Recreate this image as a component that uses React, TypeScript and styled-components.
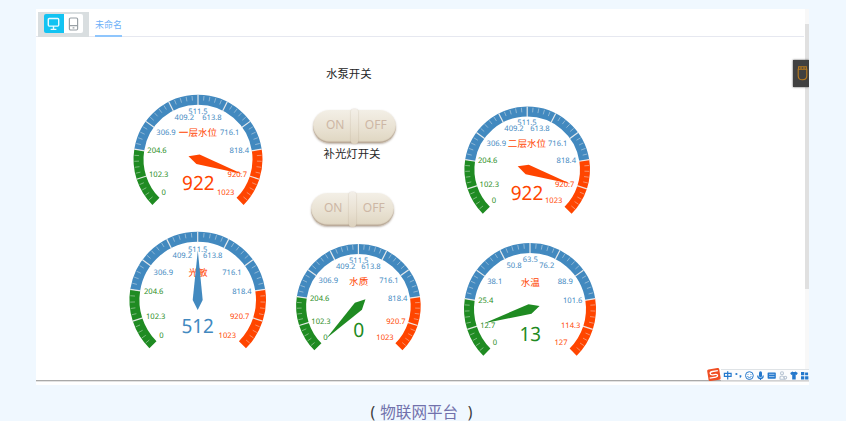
import React from "react";
import styled, { createGlobalStyle } from "styled-components";

const GlobalStyle = createGlobalStyle`
  * { box-sizing: border-box; }
  html, body { margin: 0; padding: 0; background: #f0f8ff; }
  body { font-family: "Noto Sans", "Noto Sans CJK SC", sans-serif; overflow: hidden; }
`;

const BLUE = "#4289bf";
const GREEN = "#1f8b22";
const RED = "#ff4500";

const Page = styled.main`
  display: flex;
  flex-direction: column;
  width: 846px;
  height: 421px;
  padding-top: 9px;
`;
const Panel = styled.section`
  position: relative;
  display: flex;
  flex-direction: column;
  width: 773px;
  height: 376px;
  margin-left: 36px;
  background: #fff;
  overflow: hidden;
`;
const TopBar = styled.header`
  display: flex;
  width: 768px;
  height: 28px;
  padding: 3px 0 0 2px;
  border-bottom: 1px solid #e6e8f0;
`;
const DeviceGroup = styled.div`
  display: flex;
  width: 51px;
  height: 25px;
  padding: 2px 6px 4px;
  background: #d9dee0;
`;
const DeviceButton = styled.button<{ $active?: boolean }>`
  display: flex;
  align-items: center;
  justify-content: center;
  width: 19.5px;
  height: 19px;
  padding: 0;
  border: 0;
  border-radius: ${(p) => (p.$active ? "2px 0 0 2px" : "0 2px 2px 0")};
  background: ${(p) => (p.$active ? "#12c3f2" : "#fff")};
`;
const Tab = styled.div`
  width: 27px;
  height: 25px;
  margin-left: 6px;
  border-bottom: 2px solid #8fc6fd;
  color: #6cb0f8;
  font-size: 9px;
  line-height: 25px;
  white-space: nowrap;
`;
const Board = styled.div`
  position: relative;
  flex: 1;
`;
const Placed = styled.div<{ $x: number; $y: number }>`
  position: absolute;
  left: ${(p) => p.$x - 36}px;
  top: ${(p) => p.$y - 37}px;
`;
const Dial = styled.svg`
  display: block;
  overflow: visible;
  text-rendering: geometricPrecision;
`;
const Caption = styled.div`
  color: #262626;
  font-size: 11.4px;
  line-height: 16px;
  white-space: nowrap;
`;
const SwitchBody = styled.div`
  position: relative;
  display: grid;
  grid-template-columns: 1fr 1fr;
  width: 83px;
  height: 33px;
  border-radius: 17px;
  background: linear-gradient(#f3efe6, #e9e2d3 55%, #dfd6c1);
  box-shadow: inset 0 -1.5px 1px #b9a998, 0 1px 2px rgba(110, 90, 70, 0.45);
`;
const SwitchSide = styled.span<{ $shift: number }>`
  color: #cdb7a5;
  font-size: 12px;
  line-height: 30px;
  text-align: center;
  text-indent: ${(p) => p.$shift}px;
`;
const SwitchSeam = styled.i`
  position: absolute;
  left: 38px;
  top: -1px;
  width: 7px;
  height: 35px;
  border-radius: 3px;
  background: linear-gradient(#f3efe8, #e8e0d0 60%, #dcd1bd);
  box-shadow: 0 0 1.5px rgba(140, 115, 90, 0.55);
`;
const ScrollTrack = styled.div`
  position: absolute;
  right: 0;
  top: 0;
  width: 4px;
  height: 371px;
  padding-top: 15px;
  background: #f8f8f8;
`;
const ScrollThumb = styled.div`
  height: 265px;
  background: #e0e0e0;
`;
const Drawer = styled.div`
  position: absolute;
  right: 0;
  top: 51px;
  display: flex;
  align-items: center;
  justify-content: center;
  width: 16px;
  height: 27px;
  padding-left: 3px;
  background: #404040;
  box-shadow: 0 0 2px #555;
`;
const Tray = styled.div`
  position: absolute;
  right: 0;
  bottom: 4px;
  width: 104px;
  height: 18px;
`;
const BottomRule = styled.div`
  height: 5px;
  border-top: 1px solid #a9a9a9;
  box-shadow: inset 0 1px #e2e2e2;
`;
const Footer = styled.footer`
  display: flex;
  align-items: center;
  height: 36px;
  padding: 18px 0 0 370.5px;
  color: #3c3c3c;
  font-size: 15.6px;
  line-height: 18px;
  white-space: pre;
`;
const FooterLink = styled.a`
  width: 78px;
  margin: 0 9.5px 0 5px;
  color: #7171ac;
`;

type Pt = [number, number];
interface GaugeSpec {
  cx: number;
  cy: number;
  r: number;
  max: number;
  value: number;
  color: string;
  title: string;
  titleAt: Pt;
  valueAt: Pt;
  valueWidth: number;
  labels: string[];
  at: Pt[];
}

const WIDE = ["0", "102.3", "204.6", "306.9", "409.2", "511.5", "613.8", "716.1", "818.4", "920.7", "1023"];
const TEMP = ["0", "12.7", "25.4", "38.1", "50.8", "63.5", "76.2", "88.9", "101.6", "114.3", "127"];

const GAUGES: GaugeSpec[] = [
  {
    cx: 198, cy: 159.3, r: 64.5, max: 1023, value: 922, color: RED, title: "一层水位",
    titleAt: [198, 132.7], valueAt: [198.3, 183.3], valueWidth: 32.5, labels: WIDE,
    at: [[163.7, 192], [158.7, 174.7], [157, 150.3], [166, 132.3], [184.3, 116.7], [198, 111.3], [212, 116.7], [229.7, 132.3], [239.3, 150.3], [237.3, 174.7], [225.7, 192]],
  },
  {
    cx: 527.2, cy: 169.4, r: 62.8, max: 1023, value: 922, color: RED, title: "二层水位",
    titleAt: [527, 143.3], valueAt: [527, 193], valueWidth: 32.5, labels: WIDE,
    at: [[494, 200.7], [489.3, 184.7], [487.7, 160.3], [496.3, 143], [514, 127.7], [527, 122.3], [540, 127.7], [557.7, 143], [566.3, 160.3], [564.7, 184.7], [553.7, 200.7]],
  },
  {
    cx: 197.7, cy: 300, r: 68.3, max: 1023, value: 512, color: BLUE, title: "光敏",
    titleAt: [198, 272.3], valueAt: [197.7, 325.7], valueWidth: 32.5, labels: WIDE,
    at: [[161.3, 334.7], [155.7, 316.3], [153.7, 291.3], [163.3, 271.7], [182.3, 255.3], [197.7, 249.3], [212.7, 255.3], [232, 271.7], [242, 291.3], [239.7, 316.3], [227.3, 334.7]],
  },
  {
    cx: 358.4, cy: 306.3, r: 62.3, max: 1023, value: 0, color: GREEN, title: "水质",
    titleAt: [358.7, 281], valueAt: [358.7, 330], valueWidth: 11, labels: WIDE,
    at: [[325.3, 337.3], [321, 321.3], [319.7, 298], [328.3, 280.3], [345.7, 265.7], [358.7, 260.3], [371, 265.7], [389, 280.3], [397.7, 298], [396, 321.3], [385, 337.3]],
  },
  {
    cx: 530, cy: 309, r: 66, max: 127, value: 13, color: GREEN, title: "水温",
    titleAt: [530.3, 282], valueAt: [530.3, 334], valueWidth: 21.5, labels: TEMP,
    at: [[495, 342], [487.7, 325], [485.7, 300.3], [494.7, 281.3], [514, 265.3], [530.3, 259.3], [546.7, 265.3], [565.3, 281.3], [572.7, 300.3], [570.7, 325], [561, 342]],
  },
];

// Point on a circle for a fraction of the 270° sweep that starts at lower left.
const polar = (f: number, radius: number): Pt => {
  const a = ((225 - 270 * f) * Math.PI) / 180;
  return [Math.cos(a) * radius, -Math.sin(a) * radius];
};

const arc = (from: number, to: number, radius: number) => {
  const [x1, y1] = polar(from, radius);
  const [x2, y2] = polar(to, radius);
  return `M${x1} ${y1}A${radius} ${radius} 0 0 1 ${x2} ${y2}`;
};

function Gauge({ g }: { g: GaugeSpec }) {
  const band = 10;
  const mid = g.r - band / 2;
  const [ux, uy] = polar(g.value / g.max, 1);
  const len = g.r * 0.725;
  const pointer = [
    [ux * len, uy * len],
    [-uy * 5, ux * 5],
    [-ux * 10, -uy * 10],
    [uy * 5, -ux * 5],
  ].map((p) => p.join(",")).join(" ");
  const left = Math.floor(g.cx - g.r);
  const top = Math.floor(g.cy - g.r);
  const size = Math.ceil(g.r * 2) + 1;
  return (
    <Placed $x={left} $y={top}>
      <Dial width={size} height={size} viewBox={`0 0 ${size} ${size}`}>
        <g transform={`translate(${g.cx - left} ${g.cy - top})`}>
          <g fill="none" strokeWidth={band}>
            <path d={arc(0, 0.2, mid)} stroke={GREEN} />
            <path d={arc(0.2, 0.5, mid) + arc(0.5, 0.8, mid)} stroke={BLUE} />
            <path d={arc(0.8, 1, mid)} stroke={RED} />
          </g>
          {Array.from({ length: 51 }, (_, i) => {
            const major = i % 5 === 0;
            if (i === 0 || i === 50) return null;
            const [x1, y1] = polar(i / 50, g.r - (major ? 0 : 0.8));
            const [x2, y2] = polar(i / 50, g.r - (major ? 10.5 : 5.5));
            return <line key={i} x1={x1} y1={y1} x2={x2} y2={y2} stroke="#eee" strokeOpacity={major ? 0.95 : 0.75} strokeWidth={major ? 1.2 : 0.6} />;
          })}
          {g.labels.map((s, i) => (
            <text
              key={s}
              x={g.at[i][0] - g.cx}
              y={g.at[i][1] - g.cy + 2.8}
              fontSize={7.6}
              textAnchor="middle"
              fill={i <= 2 ? GREEN : i <= 8 ? BLUE : RED}
            >
              {s}
            </text>
          ))}
          <text x={g.titleAt[0] - g.cx} y={g.titleAt[1] - g.cy + 3.6} fontSize={9.6} textAnchor="middle" fill={RED}>
            {g.title}
          </text>
          <polygon points={pointer} fill={g.color} />
          <text x={g.valueAt[0] - g.cx} y={g.valueAt[1] - g.cy + 7.2} fontSize={19.6} textAnchor="middle" textLength={g.valueWidth} lengthAdjust="spacingAndGlyphs" fill={g.color}>
            {g.value}
          </text>
        </g>
      </Dial>
    </Placed>
  );
}

function Switch({ x, y }: { x: number; y: number }) {
  return (
    <Placed $x={x} $y={y}>
      <SwitchBody>
        <SwitchSide $shift={3}>ON</SwitchSide>
        <SwitchSide $shift={1}>OFF</SwitchSide>
        <SwitchSeam />
      </SwitchBody>
    </Placed>
  );
}

function TrayIcons() {
  return (
    <svg width="104" height="18" viewBox="705 363 104 18" style={{ display: "block" }}>
      <path d="M721 369.5h88v11h-88z" fill="#fbfcfd" />
      <path d="M721 369.5h88" stroke="#dfe3e6" />
      <g transform="rotate(-9 714 374.5)">
        <rect x="707.8" y="368.6" width="12.2" height="11.8" rx="1.6" fill="#f04e23" />
        <path d="M718.4 371.3h-5.4q-2.6 0-2.6 1.6t2.4 1.7h2.6q2 0 2 1.4t-2 1.4h-6.2" fill="none" stroke="#fff" strokeWidth="1.3" />
      </g>
      <g fill="none" stroke="#2478cc" strokeWidth="1.2">
        <path d="M724.4 373.4h6.7v3h-6.7zM727.7 371.2v8.4" />
        <circle cx="749.4" cy="375.6" r="3.9" strokeWidth="1" />
        <path d="M747.3 376.4q2.1 2.6 4.2 0M748 374v.8M750.9 374v.8" strokeWidth=".9" />
        <path d="M757.7 375.4q0 3 2.8 3t2.8-3M760.5 378v2" />
      </g>
      <g fill="#2478cc">
        <circle cx="736.4" cy="374" r="1.1" />
        <path d="M739.5 375.2h1.8v1.6l-1.4 1.5z" />
        <rect x="759" y="371.2" width="3" height="6" rx="1.5" />
        <rect x="767.6" y="372.4" width="8.2" height="6.4" rx=".7" />
        <path d="M790.2 373l2.2-1.5q1.5 1.1 3 0l2.4 1.5-1.1 2-1-.4v5h-3.5v-5l-1 .4z" />
        <path d="M801 372h3.3v3.3H801zM801 376.2h3.3v3.3H801zM805.1 376.2h3.3v3.3h-3.3zM805.1 372.4h3v2.9h-3z" />
      </g>
      <path d="M769 374.3h5.5M769 376.6h5.5" stroke="#bcd8f4" strokeWidth=".8" />
      <g fill="none" stroke="#b9c5d3" strokeWidth="1.1">
        <circle cx="782" cy="373.3" r="1.5" />
        <path d="M780 379.3v-2.3q2-2 3.8 0l1 2.3h-5" />
        <circle cx="785.3" cy="377.6" r="1.4" />
      </g>
    </svg>
  );
}

export default function App() {
  return (
    <>
      <GlobalStyle />
      <Page>
        <Panel>
          <TopBar>
            <DeviceGroup>
              <DeviceButton $active aria-label="desktop">
                <svg width="13" height="14" viewBox="0 0 13 14" fill="none" stroke="#e9fbff" strokeWidth="1.4">
                  <rect x="1.3" y="1.5" width="10.4" height="7.6" rx="1" />
                  <path d="M6.5 9v3M3.6 12.4h5.8" />
                </svg>
              </DeviceButton>
              <DeviceButton aria-label="mobile">
                <svg width="11" height="14" viewBox="0 0 11 14" fill="none" stroke="#98a0a5" strokeWidth="1.2">
                  <rect x="1.4" y="1" width="8.2" height="12" rx="1.2" />
                  <path d="M1.4 8.6h8.2M4.6 10.8h1.8" />
                </svg>
              </DeviceButton>
            </DeviceGroup>
            <Tab>未命名</Tab>
          </TopBar>
          <Board>
            {GAUGES.map((g) => (
              <Gauge key={g.title} g={g} />
            ))}
            <Placed $x={326} $y={66}>
              <Caption>水泵开关</Caption>
            </Placed>
            <Placed $x={323.5} $y={146}>
              <Caption>补光灯开关</Caption>
            </Placed>
            <Switch x={313} y={109.5} />
            <Switch x={311} y={193} />
          </Board>
          <BottomRule />
          <ScrollTrack>
            <ScrollThumb />
          </ScrollTrack>
          <Drawer>
            <svg width="11" height="17" viewBox="0 0 11 17" fill="none" stroke="#b87a1e" strokeWidth="1.1">
              <path d="M1.2 4.2h8.6v6.6q0 4-4.3 4t-4.3-4zM1.6 1.8h7.8v2.4H1.6zM4 2v2M7 2v2" />
            </svg>
          </Drawer>
          <Tray>
            <TrayIcons />
          </Tray>
        </Panel>
        <Footer>
          (<FooterLink>物联网平台</FooterLink>)
        </Footer>
      </Page>
    </>
  );
}
